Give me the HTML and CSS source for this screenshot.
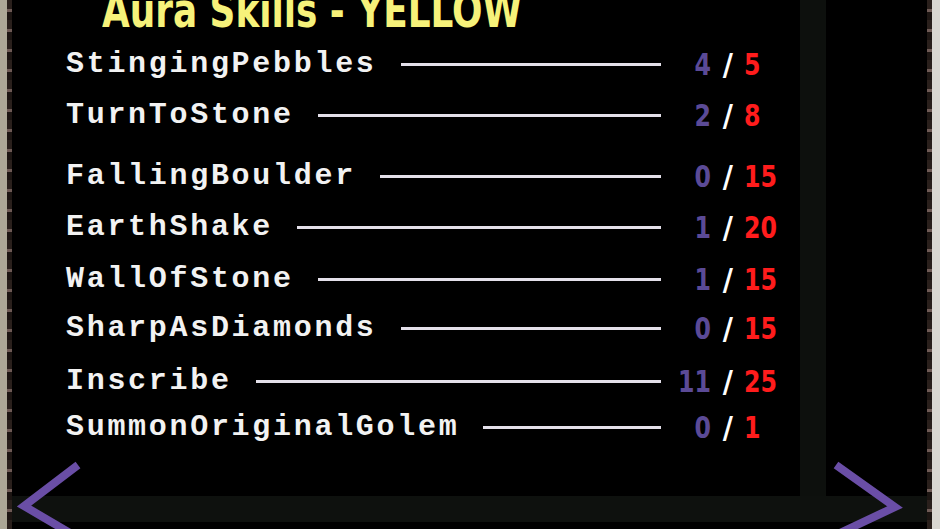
FILE: index.html
```html
<!DOCTYPE html>
<html lang="en">
<head>
  <meta charset="UTF-8">
  <title>Aura Skills - YELLOW</title>
  <link rel="stylesheet" href="styles.css">
</head>
<body>
  <div class="frame">
    <div class="edge-left"></div>
    <div class="rim"></div>

    <div class="board">
      <div class="list">
        <h1 class="title">Aura Skills - YELLOW</h1>

        <div class="rows">
          <div class="row">
            <span class="name">StingingPebbles</span>
            <span class="rule"></span>
            <span class="cur">4</span><span class="slash">/</span><span class="max">5</span>
          </div>
          <div class="row">
            <span class="name">TurnToStone</span>
            <span class="rule"></span>
            <span class="cur">2</span><span class="slash">/</span><span class="max">8</span>
          </div>
          <div class="row">
            <span class="name">FallingBoulder</span>
            <span class="rule"></span>
            <span class="cur">0</span><span class="slash">/</span><span class="max">15</span>
          </div>
          <div class="row">
            <span class="name">EarthShake</span>
            <span class="rule"></span>
            <span class="cur">1</span><span class="slash">/</span><span class="max">20</span>
          </div>
          <div class="row">
            <span class="name">WallOfStone</span>
            <span class="rule"></span>
            <span class="cur">1</span><span class="slash">/</span><span class="max">15</span>
          </div>
          <div class="row">
            <span class="name">SharpAsDiamonds</span>
            <span class="rule"></span>
            <span class="cur">0</span><span class="slash">/</span><span class="max">15</span>
          </div>
          <div class="row">
            <span class="name">Inscribe</span>
            <span class="rule"></span>
            <span class="cur">11</span><span class="slash">/</span><span class="max">25</span>
          </div>
          <div class="row">
            <span class="name">SummonOriginalGolem</span>
            <span class="rule"></span>
            <span class="cur">0</span><span class="slash">/</span><span class="max">1</span>
          </div>
        </div>
      </div>

      <div class="stripe"></div>
      <div class="band"></div>

      <!-- page arrows -->
      <svg class="arrow arrow-prev" width="70" height="70" viewBox="0 0 70 70">
        <polyline points="66,6 12,47 58,74" fill="none" stroke="#6a4ea6" stroke-width="8"/>
      </svg>
      <svg class="arrow arrow-next" width="80" height="70" viewBox="0 0 80 70">
        <polyline points="12,6 71,48 16,74" fill="none" stroke="#6a4ea6" stroke-width="8"/>
      </svg>
    </div>

    <div class="rim"></div>
    <div class="edge-right"></div>
  </div>
</body>
</html>
```

FILE: styles.css
```css
html, body {
  margin: 0;
  height: 100%;
  background: #000;
  overflow: hidden;
}

.frame {
  display: flex;
  height: 529px;
}

.edge-left {
  width: 7px;
  background: #aca796;
}

.rim {
  width: 5px;
  background: repeating-linear-gradient(180deg, #2a201c 0 9px, #6e5a55 9px 12px, #1c1512 12px 20px);
}

.edge-right {
  width: 8px;
  background: #d9d7d1;
}

.board {
  flex: 1;
  position: relative;
  display: grid;
  grid-template-columns: 788px 26px 1fr;
  grid-template-rows: 496px 26px 1fr;
  background: #000;
}

.list {
  grid-column: 1;
  grid-row: 1;
  display: flex;
  flex-direction: column;
  z-index: 1;
}

.title {
  margin: -14px 0 0 90px;
  height: 48px;
  font-family: "DejaVu Sans Condensed", "DejaVu Sans", sans-serif;
  font-weight: bold;
  font-size: 48px;
  line-height: 48px;
  color: #f6f27a;
  white-space: nowrap;
  transform: scaleX(0.83);
  transform-origin: left center;
}

/* rows sit on the spacing of the original screen */
.rows {
  margin-top: 10px;
  display: grid;
  grid-template-rows: 51px 61px 51px 52px 49px 53px 46px 40px;
}

.row {
  display: flex;
  align-items: center;
  height: 40px;
  padding-left: 54px;
}

.name {
  font-family: "Liberation Mono", monospace;
  font-weight: bold;
  font-size: 30px;
  letter-spacing: 2.7px;
  color: #f2f2f2;
  white-space: nowrap;
}

.rule {
  flex: 1;
  height: 3px;
  margin-left: 24px;
  background: #e4e0ea;
}

.cur, .slash, .max {
  display: inline-block;
  font-family: "DejaVu Sans Condensed", "DejaVu Sans", sans-serif;
  font-weight: bold;
  font-size: 31px;
  line-height: 31px;
}

.cur {
  width: 50px;
  text-align: right;
  color: #5b4a96;
  transform: scaleX(0.85);
  transform-origin: right center;
}

.slash {
  margin: 0 11px 0 12px;
  color: #fff;
}

.max {
  width: 56px;
  color: #ff1c1c;
  transform: scaleX(0.85);
  transform-origin: left center;
}

.stripe {
  grid-column: 2;
  grid-row: 1 / 3;
  background: #0d100d;
}

.band {
  grid-column: 1 / 4;
  grid-row: 2;
  background: #0e110e;
}

.arrow {
  position: absolute;
  z-index: 2;
}

.arrow-prev {
  left: 0;
  bottom: 0;
}

.arrow-next {
  left: 812px;
  bottom: 0;
}
```
